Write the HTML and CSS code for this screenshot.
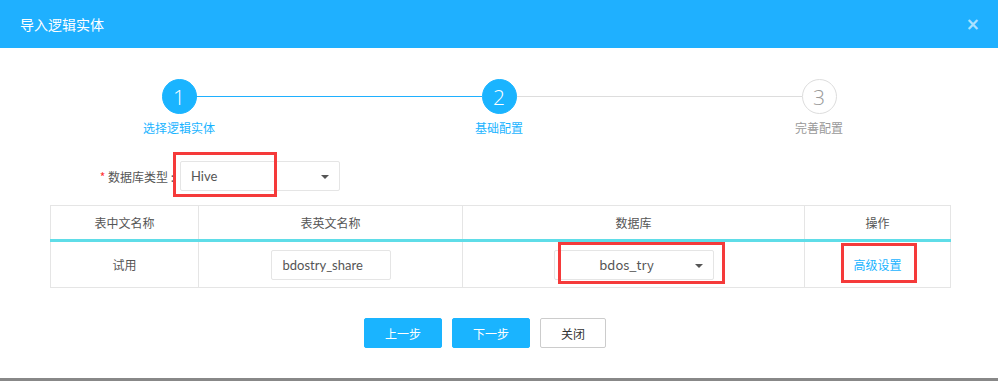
FILE: index.html
```html
<!DOCTYPE html>
<html lang="zh-CN">
<head>
  <meta charset="UTF-8">
  <meta name="viewport" content="width=device-width, initial-scale=1.0">
  <title>导入逻辑实体</title>
  <link rel="stylesheet" href="styles.css">
</head>
<body>

  <div class="modal">
    <!-- Header -->
    <div class="modal-header">
      <span class="modal-title">导入逻辑实体</span>
      <span class="modal-close">&times;</span>
    </div>

    <div class="modal-body">
      <!-- Steps -->
      <div class="steps">
        <div class="step done">
          <div class="step-num">1</div>
          <div class="step-label">选择逻辑实体</div>
        </div>
        <div class="step active">
          <div class="step-num">2</div>
          <div class="step-label">基础配置</div>
        </div>
        <div class="step">
          <div class="step-num">3</div>
          <div class="step-label">完善配置</div>
        </div>
      </div>

      <!-- Database type -->
      <div class="form-row">
        <label class="form-label"><span class="required">*</span> 数据库类型 :</label>
        <div class="select select-type">
          <span class="select-text">Hive</span>
          <span class="caret"></span>
          <span class="mark mark-type"></span>
        </div>
      </div>

      <!-- Table -->
      <table class="grid">
        <colgroup>
          <col style="width: 148px">
          <col style="width: 264px">
          <col style="width: 342px">
          <col style="width: 146px">
        </colgroup>
        <thead>
          <tr>
            <th>表中文名称</th>
            <th>表英文名称</th>
            <th>数据库</th>
            <th>操作</th>
          </tr>
        </thead>
        <tbody>
          <tr>
            <td>试用</td>
            <td><div class="text-input">bdostry_share</div></td>
            <td>
              <div class="select select-db">
                <span class="select-text">bdos_try</span>
                <span class="caret"></span>
                <span class="mark mark-db"></span>
              </div>
            </td>
            <td>
              <a class="link" href="javascript:void(0)">高级设置<span class="mark mark-link"></span></a>
            </td>
          </tr>
        </tbody>
      </table>

      <!-- Footer buttons -->
      <div class="actions">
        <button class="btn btn-primary prev">上一步</button>
        <button class="btn btn-primary next">下一步</button>
        <button class="btn btn-default">关闭</button>
      </div>
    </div>
  </div>

</body>
</html>
```

FILE: styles.css
```css
/* General */
body {
  margin: 0;
  padding: 0;
  background: #888;
  font-family: 'Lato', 'Noto Sans CJK SC', sans-serif;
  color: #555;
}

.modal {
  width: 998px;
  height: 378px;
  background: #fff;
}

/* Header */
.modal-header {
  height: 48px;
  background: #1fb0ff;
  display: flex;
  align-items: center;
  justify-content: space-between;
  padding: 0 18px 0 20px;
}

.modal-title {
  font-family: 'Noto Sans CJK SC', sans-serif;
  font-size: 14px;
  color: #fff;
}

.modal-close {
  font-family: 'DejaVu Sans', sans-serif;
  font-size: 17px;
  font-weight: bold;
  color: rgba(255, 255, 255, 0.65);
  line-height: 1;
}

/* Steps */
.steps {
  display: flex;
  margin: 31px 19px 0;
}

.step {
  flex: 1;
  display: flex;
  flex-direction: column;
  align-items: center;
  position: relative;
}

.step::after {
  content: "";
  position: absolute;
  top: 17px;
  left: 177px;
  width: 286px;
  border-top: 1px solid #ddd;
}

.step:last-child::after {
  display: none;
}

.step.done::after {
  border-top-color: #1fb0ff;
}

.step-num {
  width: 33px;
  height: 33px;
  border: 1px solid #ddd;
  border-radius: 50%;
  display: flex;
  align-items: center;
  justify-content: center;
  font-family: 'Open Sans', sans-serif;
  font-weight: 300;
  font-size: 21px;
  color: #999;
  background: #fff;
  position: relative;
  z-index: 1;
}

.step.done .step-num,
.step.active .step-num {
  background: #1ab4ff;
  border-color: #1ab4ff;
  color: #fff;
}

.step-label {
  margin-top: 5px;
  font-family: 'Noto Sans CJK SC', sans-serif;
  font-size: 12px;
  line-height: 18px;
  color: #999;
}

.step.done .step-label,
.step.active .step-label {
  color: #1ab4ff;
}

/* Form row */
.form-row {
  display: flex;
  align-items: center;
  margin-top: 24px;
}

.form-label {
  width: 174px;
  text-align: right;
  font-family: 'Noto Sans CJK SC', sans-serif;
  font-size: 12px;
  color: #555;
}

.required {
  color: #f33;
}

.select {
  position: relative;
  box-sizing: border-box;
  height: 30px;
  border: 1px solid #e5e5e5;
  border-radius: 2px;
  font-size: 13px;
  color: #555;
  display: flex;
  align-items: center;
}

.select-type {
  width: 160px;
  margin-left: 6px;
  padding-left: 10px;
}

.select-db {
  width: 160px;
  margin: 0 auto;
  justify-content: center;
  padding-right: 14px;
}

.caret {
  position: absolute;
  right: 10px;
  top: 13px;
  width: 0;
  height: 0;
  border-left: 4px solid transparent;
  border-right: 4px solid transparent;
  border-top: 4px solid #555;
}

/* Red annotation boxes */
.mark {
  position: absolute;
  border: 3px solid #f53a3a;
  pointer-events: none;
}

.mark-type {
  left: -8px;
  top: -10px;
  width: 98px;
  height: 39px;
}

.mark-db {
  left: 3px;
  top: -9px;
  width: 161px;
  height: 36px;
}

.mark-link {
  left: -12px;
  top: -14px;
  width: 70px;
  height: 34px;
}

/* Table */
.grid {
  width: 900px;
  margin: 14px 0 0 50px;
  border-collapse: collapse;
  table-layout: fixed;
  font-family: 'Noto Sans CJK SC', sans-serif;
  font-size: 12px;
}

.grid th,
.grid td {
  border: 1px solid #e5e5e5;
  text-align: center;
  padding: 0;
  color: #555;
}

.grid th {
  height: 33px;
  font-weight: normal;
  border-bottom: 3px solid #5fdde8;
}

.grid td {
  height: 45px;
}

.text-input {
  box-sizing: border-box;
  width: 120px;
  height: 30px;
  margin: 0 auto;
  padding-left: 11px;
  border: 1px solid #e5e5e5;
  border-radius: 2px;
  text-align: left;
  font-family: 'Lato', sans-serif;
  font-size: 13px;
  line-height: 28px;
  color: #555;
}

.link {
  position: relative;
  display: inline-block;
  line-height: 16px;
  color: #1ab4ff;
  text-decoration: none;
}

/* Buttons */
.actions {
  display: flex;
  justify-content: center;
  gap: 10px;
  margin-top: 30px;
  padding-right: 28px;
}

.btn {
  height: 30px;
  border-radius: 2px;
  font-family: 'Noto Sans CJK SC', sans-serif;
  font-size: 12px;
  cursor: pointer;
  padding: 0;
}

.btn-primary {
  width: 78px;
  background: #1ab4ff;
  border: 1px solid #1ab4ff;
  color: #fff;
}

.btn-default {
  width: 66px;
  background: #fff;
  border: 1px solid #ccc;
  color: #333;
}
```
